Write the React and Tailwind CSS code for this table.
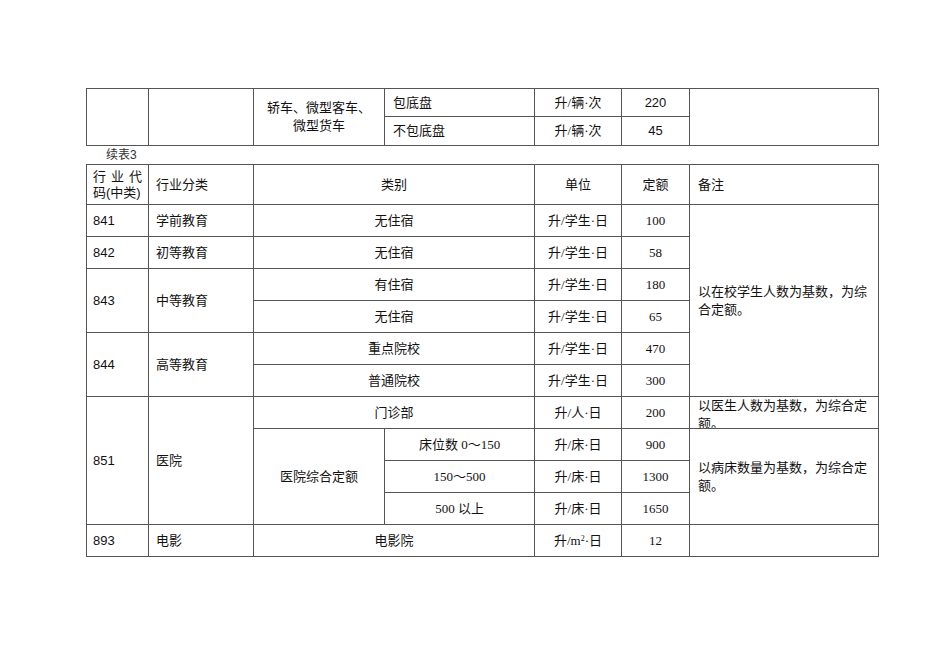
const serif = "font-['Liberation_Serif','Noto_Sans_CJK_SC',serif]";
const sans = "font-['Liberation_Sans','Noto_Sans_CJK_SC',sans-serif]";
const td = "border border-[#555] p-0 align-middle";

function Cols() {
  return (
    <colgroup>
      <col className="w-[62px]" />
      <col className="w-[105px]" />
      <col className="w-[131px]" />
      <col className="w-[150px]" />
      <col className="w-[87px]" />
      <col className="w-[68px]" />
      <col className="w-[189px]" />
    </colgroup>
  );
}

const eduRows = [
  { code: "841", name: "学前教育", items: [{ kind: "无住宿", value: "100" }] },
  { code: "842", name: "初等教育", items: [{ kind: "无住宿", value: "58" }] },
  {
    code: "843",
    name: "中等教育",
    items: [
      { kind: "有住宿", value: "180" },
      { kind: "无住宿", value: "65" },
    ],
  },
  {
    code: "844",
    name: "高等教育",
    items: [
      { kind: "重点院校", value: "470" },
      { kind: "普通院校", value: "300" },
    ],
  },
];

export default function App() {
  let first = true;
  const eduBody = [];
  eduRows.forEach((row) => {
    row.items.forEach((item, i) => {
      eduBody.push(
        <tr key={row.code + i} className="h-[32px]">
          {i === 0 && (
            <td rowSpan={row.items.length} className={`${td} ${sans} pl-[6px]`}>
              {row.code}
            </td>
          )}
          {i === 0 && (
            <td rowSpan={row.items.length} className={`${td} pl-[7px]`}>
              {row.name}
            </td>
          )}
          <td colSpan={2} className={`${td} text-center`}>
            {item.kind}
          </td>
          <td className={`${td} text-center`}>升/学生·日</td>
          <td className={`${td} text-center`}>{item.value}</td>
          {first && (
            <td rowSpan={6} className={`${td} pl-[8px] pr-[2px]`}>
              以在校学生人数为基数，为综合定额。
            </td>
          )}
        </tr>
      );
      first = false;
    });
  });

  return (
    <div className={`min-h-screen bg-white pt-[88px] pl-[86px] text-[13px] leading-[18px] text-[#111] ${serif}`}>
      {/* 上一页延续的表格 */}
      <table className="table-fixed border-collapse w-[793px]">
        <Cols />
        <tbody>
          <tr className="h-[28px]">
            <td rowSpan={2} className={td}></td>
            <td rowSpan={2} className={td}></td>
            <td rowSpan={2} className={`${td} text-center`}>
              轿车、微型客车、
              <br />
              微型货车
            </td>
            <td className={`${td} pl-[8px]`}>包底盘</td>
            <td className={`${td} text-center`}>升/辆·次</td>
            <td className={`${td} text-center ${sans}`}>220</td>
            <td rowSpan={2} className={td}></td>
          </tr>
          <tr className="h-[29px]">
            <td className={`${td} pl-[8px]`}>不包底盘</td>
            <td className={`${td} text-center`}>升/辆·次</td>
            <td className={`${td} text-center ${sans}`}>45</td>
          </tr>
        </tbody>
      </table>

      <div className={`h-[18px] pl-[20px] text-[12px] leading-[18px] text-[#333] ${sans}`}>续表3</div>

      <table className="table-fixed border-collapse w-[793px]">
        <Cols />
        <tbody>
          <tr className="h-[40px]">
            <td className={`${td} px-[6px] ${sans} leading-[16px]`}>
              <div className="flex justify-between">
                <span>行</span>
                <span>业</span>
                <span>代</span>
              </div>
              <div>码(中类)</div>
            </td>
            <td className={`${td} pl-[7px]`}>行业分类</td>
            <td colSpan={2} className={`${td} text-center`}>类别</td>
            <td className={`${td} text-center`}>单位</td>
            <td className={`${td} text-center`}>定额</td>
            <td className={`${td} pl-[8px]`}>备注</td>
          </tr>

          {eduBody}

          <tr className="h-[32px]">
            <td rowSpan={4} className={`${td} ${sans} pl-[6px]`}>851</td>
            <td rowSpan={4} className={`${td} pl-[7px]`}>医院</td>
            <td colSpan={2} className={`${td} text-center`}>门诊部</td>
            <td className={`${td} text-center`}>升/人·日</td>
            <td className={`${td} text-center`}>200</td>
            <td className={`${td} align-top`}>
              <div className="h-[31px] overflow-hidden pl-[8px] pr-[2px] pt-0">
                以医生人数为基数，为综合定额。
              </div>
            </td>
          </tr>
          <tr className="h-[32px]">
            <td rowSpan={3} className={`${td} text-center`}>医院综合定额</td>
            <td className={`${td} text-center`}>床位数 0～150</td>
            <td className={`${td} text-center`}>升/床·日</td>
            <td className={`${td} text-center`}>900</td>
            <td rowSpan={3} className={`${td} pl-[8px] pr-[2px]`}>
              以病床数量为基数，为综合定额。
            </td>
          </tr>
          <tr className="h-[32px]">
            <td className={`${td} text-center`}>150～500</td>
            <td className={`${td} text-center`}>升/床·日</td>
            <td className={`${td} text-center`}>1300</td>
          </tr>
          <tr className="h-[32px]">
            <td className={`${td} text-center`}>500 以上</td>
            <td className={`${td} text-center`}>升/床·日</td>
            <td className={`${td} text-center`}>1650</td>
          </tr>

          <tr className="h-[32px]">
            <td className={`${td} ${sans} pl-[6px]`}>893</td>
            <td className={`${td} pl-[7px]`}>电影</td>
            <td colSpan={2} className={`${td} text-center`}>电影院</td>
            <td className={`${td} text-center`}>
              升/m<sup className="text-[8px]">2</sup>·日
            </td>
            <td className={`${td} text-center`}>12</td>
            <td className={td}></td>
          </tr>
        </tbody>
      </table>
    </div>
  );
}
